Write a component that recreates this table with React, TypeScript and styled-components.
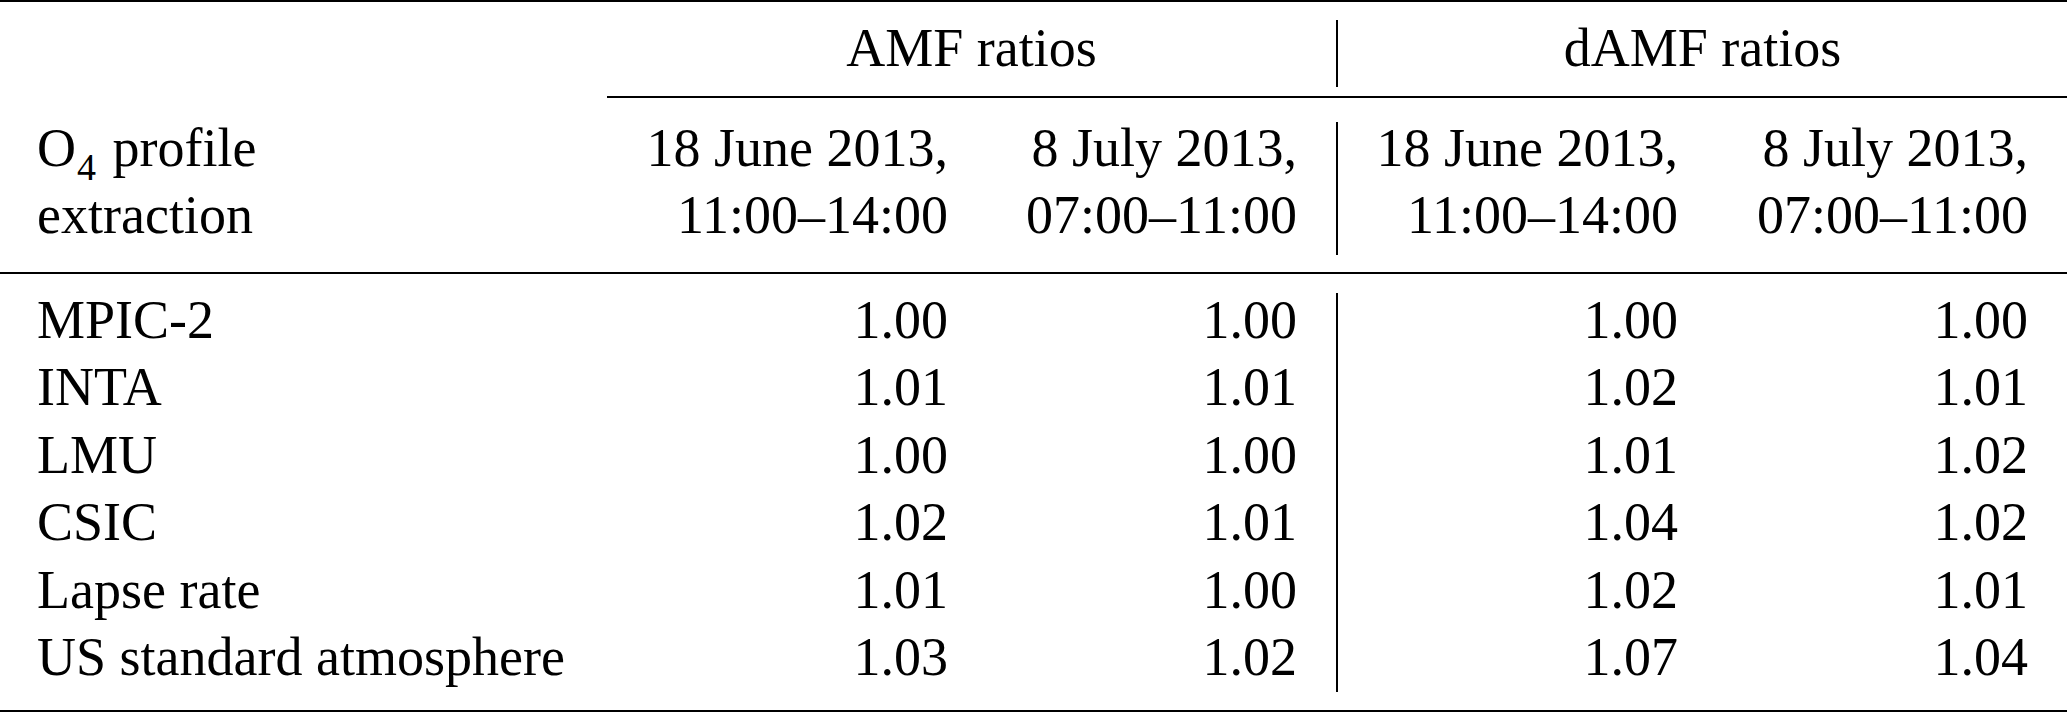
import React from 'react';
import styled, { createGlobalStyle } from 'styled-components';

const GlobalStyle = createGlobalStyle`
  html, body {
    margin: 0;
    padding: 0;
    background: #fff;
  }
  body {
    font-family: "Liberation Serif", "Times New Roman", serif;
    color: #000;
  }
`;

const Table = styled.div`
  width: 2067px;
  border-top: 2px solid #000;
  border-bottom: 2px solid #000;
  font-size: 54px;
  line-height: 67px;
`;

const Row = styled.div`
  display: flex;
`;

const Spacer = styled.div`
  width: 607px;
  flex: none;
`;

const GroupBar = styled.div`
  display: flex;
  flex: 1;
  border-bottom: 2px solid #000;
`;

const GroupTitle = styled.div<{ $w: number }>`
  width: ${p => p.$w}px;
  flex: none;
  padding: 13px 0 14px;
  text-align: center;
`;

const Divider = styled.div<{ $top: number; $bottom: number }>`
  width: 2px;
  flex: none;
  background: #000;
  margin: ${p => p.$top}px 0 ${p => p.$bottom}px;
`;

const HeadRow = styled.div`
  display: flex;
  border-bottom: 2px solid #000;
`;

const HeadCell = styled.div<{ $w: number; $pad: number; $label?: boolean }>`
  width: ${p => p.$w}px;
  flex: none;
  box-sizing: border-box;
  padding: 17px ${p => (p.$label ? 0 : p.$pad)}px 23px ${p => (p.$label ? p.$pad : 0)}px;
  text-align: ${p => (p.$label ? 'left' : 'right')};
  white-space: nowrap;
`;

const Sub = styled.sub`
  font-size: 38px;
  line-height: 0;
  vertical-align: -14px;
  margin: 0 3px 0 1px;
`;

const Body = styled.div`
  display: flex;
`;

const BodyCol = styled.div<{ $w: number; $pad: number; $label?: boolean }>`
  width: ${p => p.$w}px;
  flex: none;
  box-sizing: border-box;
  display: flex;
  flex-direction: column;
  padding: 13px ${p => (p.$label ? 0 : p.$pad)}px 18.5px ${p => (p.$label ? p.$pad : 0)}px;
  text-align: ${p => (p.$label ? 'left' : 'right')};
  line-height: 67.4px;
  white-space: nowrap;
`;

const Cell = styled.div``;

const rows = [
  { name: 'MPIC-2', v: ['1.00', '1.00', '1.00', '1.00'] },
  { name: 'INTA', v: ['1.01', '1.01', '1.02', '1.01'] },
  { name: 'LMU', v: ['1.00', '1.00', '1.01', '1.02'] },
  { name: 'CSIC', v: ['1.02', '1.01', '1.04', '1.02'] },
  { name: 'Lapse rate', v: ['1.01', '1.00', '1.02', '1.01'] },
  { name: 'US standard atmosphere', v: ['1.03', '1.02', '1.07', '1.04'] },
];

const cols = [
  { w: 380, pad: 40, date: '18 June 2013,', time: '11:00–14:00' },
  { w: 348, pad: 39, date: '8 July 2013,', time: '07:00–11:00' },
  { w: 380, pad: 40, date: '18 June 2013,', time: '11:00–14:00' },
  { w: 349, pad: 39, date: '8 July 2013,', time: '07:00–11:00' },
];

const App = () => {
  const valueCol = (i: number) => (
    <BodyCol key={i} $w={cols[i].w} $pad={cols[i].pad}>
      {rows.map(r => <Cell key={r.name}>{r.v[i]}</Cell>)}
    </BodyCol>
  );

  const headCol = (i: number) => (
    <HeadCell key={i} $w={cols[i].w} $pad={cols[i].pad}>
      {cols[i].date}
      <br />
      {cols[i].time}
    </HeadCell>
  );

  return (
    <>
      <GlobalStyle />
      <Table>
        <Row>
          <Spacer />
          <GroupBar>
            <GroupTitle $w={729}>AMF ratios</GroupTitle>
            <Divider $top={18} $bottom={9} />
            <GroupTitle $w={729}>dAMF ratios</GroupTitle>
          </GroupBar>
        </Row>

        <HeadRow>
          <HeadCell $w={608} $pad={37} $label>
            O<Sub>4</Sub> profile
            <br />
            extraction
          </HeadCell>
          {headCol(0)}
          {headCol(1)}
          <Divider $top={24} $bottom={17} />
          {headCol(2)}
          {headCol(3)}
        </HeadRow>

        <Body>
          <BodyCol $w={608} $pad={37} $label>
            {rows.map(r => <Cell key={r.name}>{r.name}</Cell>)}
          </BodyCol>
          {valueCol(0)}
          {valueCol(1)}
          <Divider $top={19} $bottom={18} />
          {valueCol(2)}
          {valueCol(3)}
        </Body>
      </Table>
    </>
  );
};

export default App;
